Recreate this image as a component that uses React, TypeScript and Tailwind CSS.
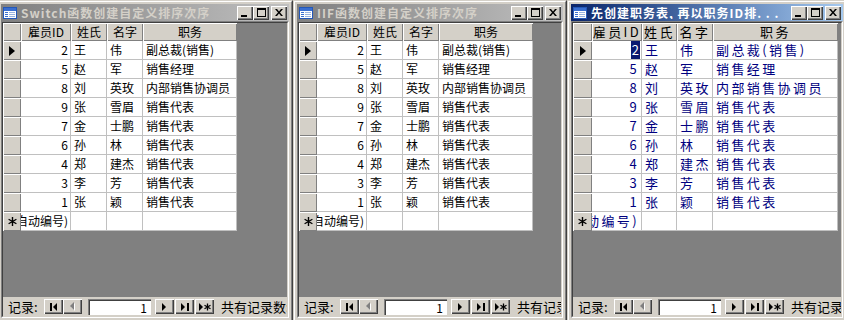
import React from "react";

const rows: [string, string, string, string][] = [
  ["2", "王", "伟", "副总裁(销售)"],
  ["5", "赵", "军", "销售经理"],
  ["8", "刘", "英玫", "内部销售协调员"],
  ["9", "张", "雪眉", "销售代表"],
  ["7", "金", "士鹏", "销售代表"],
  ["6", "孙", "林", "销售代表"],
  ["4", "郑", "建杰", "销售代表"],
  ["3", "李", "芳", "销售代表"],
  ["1", "张", "颖", "销售代表"],
];

const cellRaised = "bg-[#d4d0c8] shadow-[inset_1px_1px_0_#ffffff,inset_-1px_-1px_0_#808080]";
const btnRaised =
  "bg-[#d4d0c8] shadow-[inset_1px_1px_0_#ffffff,inset_-1px_-1px_0_#404040,inset_-2px_-2px_0_#808080]";

function TitleIcon() {
  return (
    <svg width="16" height="14" viewBox="0 0 16 14" className="shrink-0">
      <rect x="1.5" y="1.5" width="13" height="11" fill="#ffffff" stroke="#2458b8" />
      <rect x="2" y="2" width="12" height="3" fill="#3a6fd0" />
      <rect x="3" y="6" width="3" height="1" fill="#3a6fd0" />
      <rect x="7" y="6" width="6" height="1" fill="#9ab4e0" />
      <rect x="3" y="8" width="3" height="1" fill="#3a6fd0" />
      <rect x="7" y="8" width="6" height="1" fill="#9ab4e0" />
      <rect x="3" y="10" width="3" height="1" fill="#3a6fd0" />
      <rect x="7" y="10" width="6" height="1" fill="#9ab4e0" />
    </svg>
  );
}

function CapBtn({ kind }: { kind: "min" | "max" | "close" }) {
  return (
    <div className={`w-[16px] h-[14px] shrink-0 flex items-center justify-center ${btnRaised}`}>
      {kind === "min" && (
        <svg width="8" height="8" viewBox="0 0 8 8">
          <rect x="0" y="6" width="6" height="2" fill="#000" />
        </svg>
      )}
      {kind === "max" && (
        <svg width="9" height="9" viewBox="0 0 9 9">
          <rect x="0.5" y="0.5" width="8" height="8" fill="none" stroke="#000" />
          <rect x="0" y="0" width="9" height="2" fill="#000" />
        </svg>
      )}
      {kind === "close" && (
        <svg width="8" height="7" viewBox="0 0 8 7">
          <path d="M0 0h2l2 2.5L6 0h2L5 3.5 8 7H6L4 4.5 2 7H0l3-3.5z" fill="#000" />
        </svg>
      )}
    </div>
  );
}

function NavBtn({ children, cls = "" }: { children: React.ReactNode; cls?: string }) {
  return (
    <div className={`w-[19px] h-[15px] shrink-0 flex items-center justify-center ${btnRaised} ${cls}`}>{children}</div>
  );
}

function Asterisk({ color = "#000" }: { color?: string }) {
  return (
    <svg width="9" height="9" viewBox="0 0 9 9">
      <path d="M4.5 0v9M0.6 2.25l7.8 4.5M0.6 6.75l7.8-4.5" stroke={color} strokeWidth="1.4" />
    </svg>
  );
}

function NavBar() {
  return (
    <div className="h-[19px] bg-[#d4d0c8] flex items-center text-[13px] text-black whitespace-nowrap overflow-hidden shrink-0">
      <span className="w-[41px] shrink-0 pl-[5px] leading-none">记录:</span>
      <NavBtn>
        <svg width="8" height="8" viewBox="0 0 8 8">
          <rect x="0" y="0" width="2" height="8" fill="#000" />
          <polygon points="7,0 3,4 7,8" fill="#000" />
        </svg>
      </NavBtn>
      <NavBtn>
        <svg width="6" height="10" viewBox="0 0 6 10">
          <polygon points="5,1 1,5 5,9" fill="#ffffff" />
          <polygon points="4,0 0,4 4,8" fill="#808080" />
        </svg>
      </NavBtn>
      <div className="ml-[6px] w-[63px] h-[16px] shrink-0 bg-white shadow-[inset_1px_1px_0_#808080,inset_2px_2px_0_#404040,inset_-1px_-1px_0_#ffffff] flex items-end justify-end pr-[4px] text-[12px] leading-[14px]">
        1
      </div>
      <NavBtn cls="ml-[4px]">
        <svg width="5" height="8" viewBox="0 0 5 8">
          <polygon points="0,0 4,4 0,8" fill="#000" />
        </svg>
      </NavBtn>
      <NavBtn cls="ml-[1px]">
        <svg width="8" height="8" viewBox="0 0 8 8">
          <polygon points="0,0 4,4 0,8" fill="#000" />
          <rect x="6" y="0" width="2" height="8" fill="#000" />
        </svg>
      </NavBtn>
      <NavBtn cls="ml-[1px]">
        <svg width="12" height="8" viewBox="0 0 12 8">
          <polygon points="0,0 4,4 0,8" fill="#000" />
          <path d="M8.5 0.5v7M5.5 2.25l6 3.5M5.5 5.75l6-3.5" stroke="#000" strokeWidth="1.3" />
        </svg>
      </NavBtn>
      <span className="ml-[7px] shrink-0 leading-none">共有记录数: 9</span>
    </div>
  );
}

type WinProps = {
  title: string;
  active?: boolean;
  fang?: boolean;
  cls: string;
  w: [string, string, string, string, string];
};

function Win({ title, active, fang, cls, w }: WinProps) {
  const [wSel, wId, wLast, wFirst, wJob] = w;
  const txt = fang ? "text-[13px] tracking-[2.4px] text-[#000080]" : "text-[12px] text-black";
  const hdr = fang ? "text-[13px] tracking-[2.4px] text-black" : "text-[12px] text-black";
  const dataCell = "h-full bg-white border-r border-b border-[#c0c0c0] flex items-center overflow-hidden whitespace-nowrap shrink-0";
  return (
    <div
      className={`shrink-0 h-[322px] flex flex-col border border-t-[#d4d0c8] border-l-[#d4d0c8] border-r-[#404040] border-b-[#404040] ${cls}`}
    >
      <div className="flex-1 flex flex-col border border-t-white border-l-white border-r-[#808080] border-b-[#808080] bg-[#d4d0c8] p-[2px]">
        <div
          className={`h-[17px] shrink-0 flex items-center pl-[1px] pr-[2px] ${
            active ? "bg-linear-to-r from-[#0a246a] to-[#a6caf0]" : "bg-linear-to-r from-[#808080] to-[#c0c0c0]"
          }`}
        >
          <TitleIcon />
          <span
            className={`ml-[3px] flex-1 overflow-hidden whitespace-nowrap text-[12px] font-bold tracking-[1px] leading-none ${
              active ? "text-white" : "text-[#d4d0c8]"
            }`}
          >
            {title}
          </span>
          <CapBtn kind="min" />
          <CapBtn kind="max" />
          <div className="ml-[2px] shrink-0">
            <CapBtn kind="close" />
          </div>
        </div>
        <div className="flex-1 flex flex-col border border-t-[#808080] border-l-[#808080] border-b-white border-r-white">
          <div className="flex-1 flex flex-col border border-t-[#404040] border-l-[#404040] border-b-[#d4d0c8] border-r-[#d4d0c8]">
            <div className="h-[274px] shrink-0 bg-[#808080] overflow-hidden flex flex-col items-start">
              <div className="flex h-[18px] shrink-0">
                <div className={`${wSel} h-full shrink-0 ${cellRaised}`} />
                {[
                  [wId, "雇员ID"],
                  [wLast, "姓氏"],
                  [wFirst, "名字"],
                  [wJob, "职务"],
                ].map(([cw, label]) => (
                  <div
                    key={label}
                    className={`${cw} h-full shrink-0 ${cellRaised} ${hdr} text-center leading-[18px] overflow-hidden whitespace-nowrap`}
                  >
                    {label}
                  </div>
                ))}
              </div>
              {rows.map((r, i) => (
                <div key={i} className="flex h-[19px] shrink-0">
                  <div className={`${wSel} h-full shrink-0 ${cellRaised} flex items-center justify-center pl-[1px]`}>
                    {i === 0 && (
                      <svg width="7" height="10" viewBox="0 0 7 10">
                        <polygon points="0,0 6,5 0,10" fill="#000" />
                      </svg>
                    )}
                  </div>
                  <div className={`${wId} ${dataCell} justify-end pr-[2px] ${txt}`}>
                    {fang && i === 0 ? (
                      <span className="bg-[#0a1a70] text-white px-[1px] tracking-normal mr-[-1px]">{r[0]}</span>
                    ) : (
                      r[0]
                    )}
                  </div>
                  <div className={`${wLast} ${dataCell} pl-[3px] ${txt}`}>{r[1]}</div>
                  <div className={`${wFirst} ${dataCell} pl-[3px] ${txt}`}>{r[2]}</div>
                  <div className={`${wJob} ${dataCell} pl-[3px] ${txt}`}>{r[3]}</div>
                </div>
              ))}
              <div className="flex h-[19px] shrink-0">
                <div className={`${wSel} h-full shrink-0 ${cellRaised} flex items-center justify-center`}>
                  <Asterisk />
                </div>
                <div className={`${wId} ${dataCell} justify-end pr-[2px] ${txt}`}>(自动编号)</div>
                <div className={`${wLast} ${dataCell}`} />
                <div className={`${wFirst} ${dataCell}`} />
                <div className={`${wJob} ${dataCell}`} />
              </div>
            </div>
            <NavBar />
          </div>
        </div>
      </div>
    </div>
  );
}

export default function App() {
  return (
    <div className="w-[844px] h-[320px] overflow-hidden flex bg-[#d4d0c8] font-['Noto_Sans_CJK_SC','Liberation_Sans',sans-serif]">
      <Win
        title="Switch函数创建自定义排序次序"
        cls="w-[296px] ml-[-3px]"
        w={["w-[18px]", "w-[50px]", "w-[36px]", "w-[36px]", "w-[94px]"]}
      />
      <Win
        title="IIF函数创建自定义排序次序"
        cls="w-[274px]"
        w={["w-[18px]", "w-[50px]", "w-[36px]", "w-[36px]", "w-[94px]"]}
      />
      <Win
        title="先创建职务表, 再以职务ID排. . ."
        active
        fang
        cls="w-[280px]"
        w={["w-[19px]", "w-[50px]", "w-[35px]", "w-[36px]", "w-[125px]"]}
      />
    </div>
  );
}
